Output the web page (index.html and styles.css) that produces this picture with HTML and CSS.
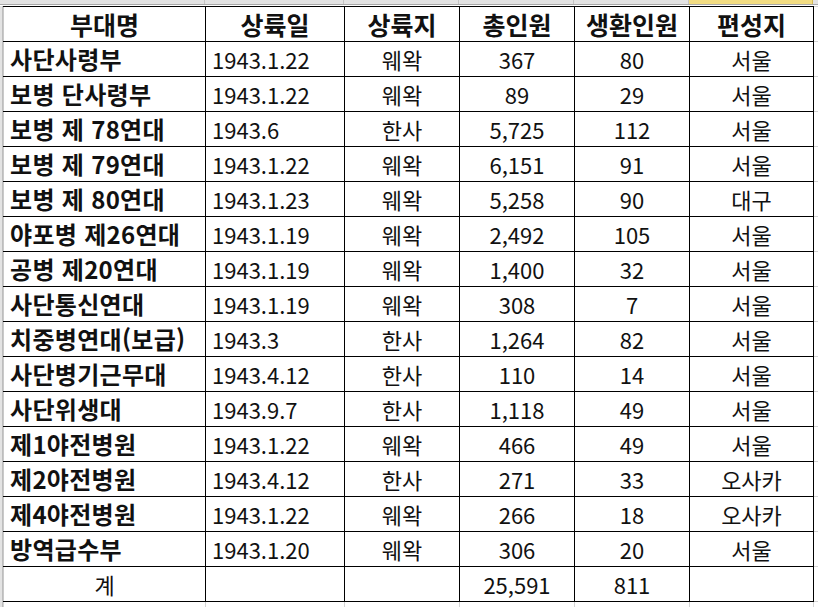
FILE: index.html
```html
<!DOCTYPE html>
<html lang="ko">
<head>
<meta charset="utf-8">
<link rel="stylesheet" href="styles.css">
</head>
<body>
<div class="sheet">
  <div class="colheads">
    <div class="ch" style="width:205px"></div>
    <div class="ch" style="width:139px"></div>
    <div class="ch" style="width:115px"></div>
    <div class="ch" style="width:115px"></div>
    <div class="ch" style="width:115px"></div>
    <div class="ch sel" style="width:124px"></div>
    <div class="ch"></div>
  </div>
  <div class="body">
    <div class="rowheads"></div>
    <table class="grid">
      <colgroup>
        <col class="c1"><col class="c2"><col class="c3"><col class="c4"><col class="c5"><col class="c6"><col class="c7">
      </colgroup>
      <thead>
        <tr class="hd">
          <th>부대명</th><th>상륙일</th><th>상륙지</th><th>총인원</th><th>생환인원</th><th>편성지</th><td class="x"></td>
        </tr>
      </thead>
      <tbody>
        <tr><td class="name">사단사령부</td><td class="date">1943.1.22</td><td class="ctr">웨왁</td><td class="ctr">367</td><td class="ctr">80</td><td class="ctr">서울</td><td class="x"></td></tr>
        <tr><td class="name">보병 단사령부</td><td class="date">1943.1.22</td><td class="ctr">웨왁</td><td class="ctr">89</td><td class="ctr">29</td><td class="ctr">서울</td><td class="x"></td></tr>
        <tr><td class="name">보병 제 78연대</td><td class="date">1943.6</td><td class="ctr">한사</td><td class="ctr">5,725</td><td class="ctr">112</td><td class="ctr">서울</td><td class="x"></td></tr>
        <tr><td class="name">보병 제 79연대</td><td class="date">1943.1.22</td><td class="ctr">웨왁</td><td class="ctr">6,151</td><td class="ctr">91</td><td class="ctr">서울</td><td class="x"></td></tr>
        <tr><td class="name">보병 제 80연대</td><td class="date">1943.1.23</td><td class="ctr">웨왁</td><td class="ctr">5,258</td><td class="ctr">90</td><td class="ctr">대구</td><td class="x"></td></tr>
        <tr><td class="name">야포병 제26연대</td><td class="date">1943.1.19</td><td class="ctr">웨왁</td><td class="ctr">2,492</td><td class="ctr">105</td><td class="ctr">서울</td><td class="x"></td></tr>
        <tr><td class="name">공병 제20연대</td><td class="date">1943.1.19</td><td class="ctr">웨왁</td><td class="ctr">1,400</td><td class="ctr">32</td><td class="ctr">서울</td><td class="x"></td></tr>
        <tr><td class="name">사단통신연대</td><td class="date">1943.1.19</td><td class="ctr">웨왁</td><td class="ctr">308</td><td class="ctr">7</td><td class="ctr">서울</td><td class="x"></td></tr>
        <tr><td class="name">치중병연대(보급)</td><td class="date">1943.3</td><td class="ctr">한사</td><td class="ctr">1,264</td><td class="ctr">82</td><td class="ctr">서울</td><td class="x"></td></tr>
        <tr><td class="name">사단병기근무대</td><td class="date">1943.4.12</td><td class="ctr">한사</td><td class="ctr">110</td><td class="ctr">14</td><td class="ctr">서울</td><td class="x"></td></tr>
        <tr><td class="name">사단위생대</td><td class="date">1943.9.7</td><td class="ctr">한사</td><td class="ctr">1,118</td><td class="ctr">49</td><td class="ctr">서울</td><td class="x"></td></tr>
        <tr><td class="name">제1야전병원</td><td class="date">1943.1.22</td><td class="ctr">웨왁</td><td class="ctr">466</td><td class="ctr">49</td><td class="ctr">서울</td><td class="x"></td></tr>
        <tr><td class="name">제2야전병원</td><td class="date">1943.4.12</td><td class="ctr">한사</td><td class="ctr">271</td><td class="ctr">33</td><td class="ctr">오사카</td><td class="x"></td></tr>
        <tr><td class="name">제4야전병원</td><td class="date">1943.1.22</td><td class="ctr">웨왁</td><td class="ctr">266</td><td class="ctr">18</td><td class="ctr">오사카</td><td class="x"></td></tr>
        <tr><td class="name">방역급수부</td><td class="date">1943.1.20</td><td class="ctr">웨왁</td><td class="ctr">306</td><td class="ctr">20</td><td class="ctr">서울</td><td class="x"></td></tr>
        <tr><td class="ctr">계</td><td></td><td></td><td class="ctr">25,591</td><td class="ctr">811</td><td></td><td class="x"></td></tr>
        <tr class="ghost"><td></td><td></td><td></td><td></td><td></td><td></td><td class="x"></td></tr>
      </tbody>
    </table>
  </div>
</div>
</body>
</html>
```

FILE: styles.css
```css
html, body {
  margin: 0;
  padding: 0;
  background: #ffffff;
  overflow: hidden;
}

.sheet {
  width: 818px;
  height: 607px;
  overflow: hidden;
  font-family: "Noto Sans CJK KR", "Noto Sans", sans-serif;
  color: #111111;
}

.colheads {
  display: flex;
  height: 4px;
  background: #e3e3e3;
  border-bottom: 1px solid #a9a9a9;
}

.ch {
  flex: none;
  height: 4px;
  border-right: 1px solid #c4c4c4;
  box-sizing: border-box;
}

.ch:last-child {
  flex: 1;
  border-right: none;
}

.ch.sel {
  background: #f3dd83;
  border-right: 1px solid #d6bc55;
}

.body {
  display: flex;
  padding-top: 1px;
}

.rowheads {
  flex: none;
  width: 2px;
  background: #e3e3e3;
  border-right: 1px solid #bdbdbd;
}

.grid {
  border-collapse: collapse;
  table-layout: fixed;
  width: 820px;
  flex: none;
}

.c1 { width: 202px; }
.c2 { width: 139px; }
.c3 { width: 115px; }
.c4 { width: 115px; }
.c5 { width: 115px; }
.c6 { width: 124px; }
.c7 { width: 10px; }

.grid th,
.grid td {
  height: 34px;
  padding: 0;
  border: 1px solid #000000;
  font-size: 22px;
  line-height: 26px;
  white-space: nowrap;
  overflow: hidden;
  font-weight: 400;
}

.grid thead tr th {
  font-weight: 700;
  font-size: 25px;
  text-align: center;
}

.grid thead tr th:first-child {
  border-left-color: #c9c9c9;
}

.grid tbody td:first-child {
  border-left-color: #c9c9c9;
}

.grid td.name {
  font-weight: 700;
  font-size: 24px;
  text-align: left;
  padding-left: 6px;
  letter-spacing: 0.3px;
}

.grid td.date {
  text-align: left;
  padding-left: 6px;
}

.grid td.ctr {
  text-align: center;
}

.grid td.x {
  border-color: #d4d4d4;
}

.grid tr.ghost td {
  border-color: #d4d4d4;
  height: 20px;
}
```
